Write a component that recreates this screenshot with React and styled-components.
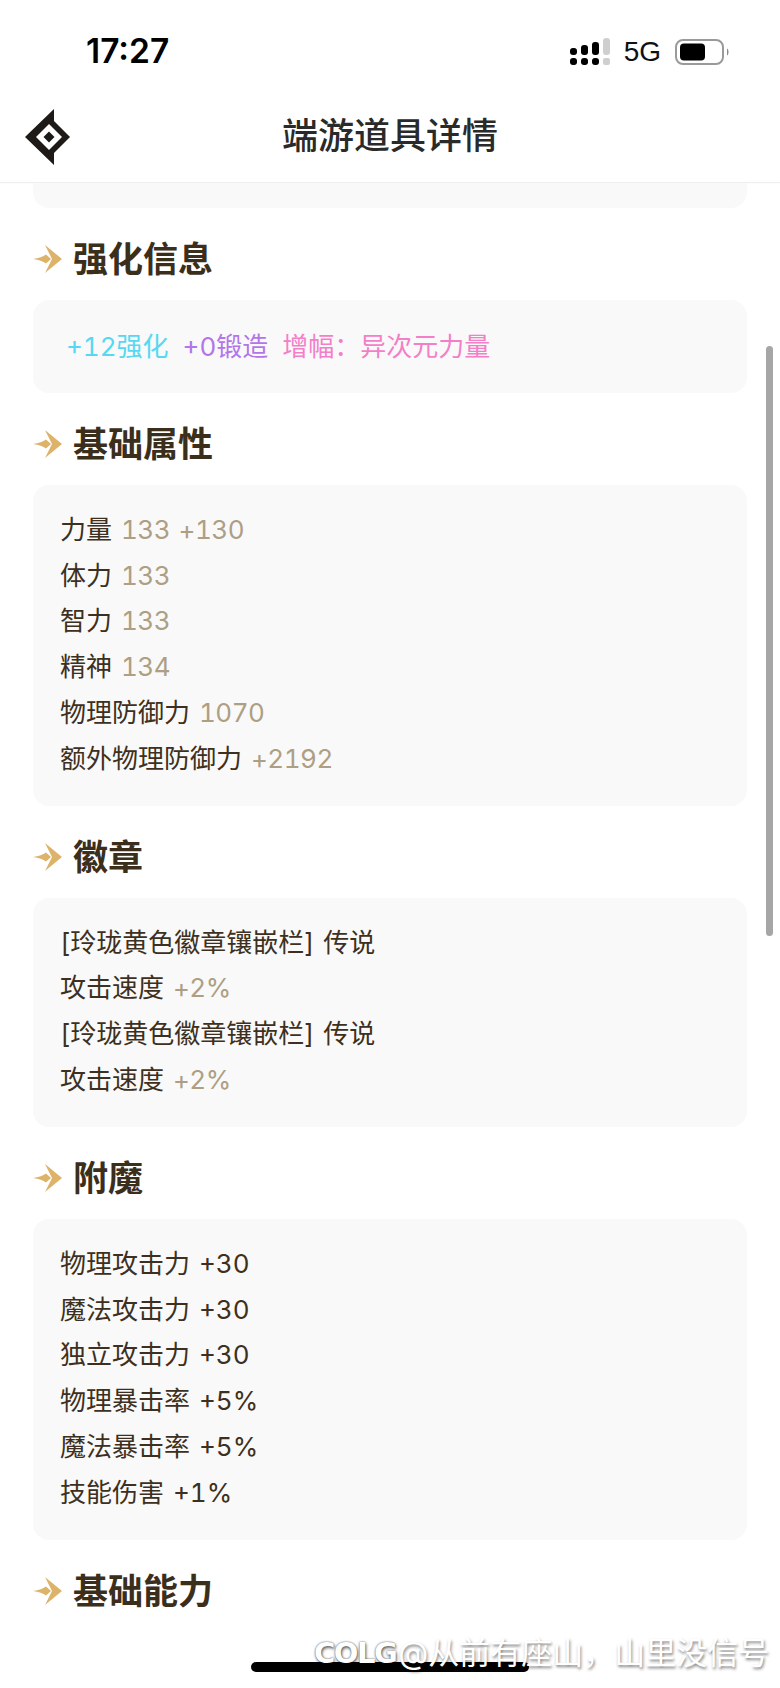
import styled, { createGlobalStyle } from "styled-components";

const GlobalStyle = createGlobalStyle`
  html, body {
    margin: 0;
    padding: 0;
    background: #fff;
  }
  * {
    box-sizing: border-box;
  }
`;

const Page = styled.div`
  position: relative;
  width: 780px;
  height: 1688px;
  overflow: hidden;
  background: #fff;
  font-family: "Inter", "Noto Sans CJK SC", sans-serif;
  color: #3d3020;
`;

const StatusBar = styled.div`
  height: 104px;
  padding: 0 50px 0 86px;
  display: flex;
  align-items: center;
  justify-content: space-between;
`;

const Time = styled.span`
  font-size: 33.5px;
  font-weight: 600;
  color: #000;
  line-height: 1;
`;

const StatusIcons = styled.div`
  display: flex;
  align-items: center;
  gap: 14px;
`;

const NetworkLabel = styled.span`
  font-family: "Liberation Sans", sans-serif;
  font-size: 28px;
  color: #111;
  line-height: 1;
`;

const NavBar = styled.header`
  height: 79px;
  display: grid;
  grid-template-columns: 90px 1fr 90px;
  align-items: center;
  border-bottom: 1px solid #f0efee;
  box-shadow: 0 1px 2px rgba(0, 0, 0, 0.02);
  padding-bottom: 13px;
`;

const LogoSlot = styled.div`
  padding-left: 25px;
  display: flex;
`;

const NavTitle = styled.h1`
  margin: 0;
  text-align: center;
  font-size: 36px;
  font-weight: 500;
  color: #2a2a2a;
  line-height: 1.2;
`;

const Content = styled.main`
  padding: 0 33px;
`;

const CutCard = styled.div`
  height: 25px;
  background: #f9f9f9;
  border-radius: 0 0 16px 16px;
`;

const SectionHead = styled.div`
  height: 40px;
  margin: 31px 0 21px;
  display: flex;
  align-items: center;
  gap: 10px;
`;

const SectionTitle = styled.h2`
  margin: 0;
  font-size: 35px;
  font-weight: 700;
  color: #3b2f1c;
  line-height: 40px;
`;

const Card = styled.section`
  background: #f9f9f9;
  border-radius: 16px;
  padding: 22px 27px 24.5px;
`;

const GradeCard = styled(Card)`
  height: 93px;
  padding: 0 33px;
  display: flex;
  align-items: center;
  gap: 14px;
`;

const Grade = styled.span`
  font-size: 26px;
  line-height: 1;
  font-variant-numeric: tabular-nums;
  color: ${(p) => p.$color};
`;

const Row = styled.div`
  font-size: 26px;
  line-height: 45.7px;
  white-space: nowrap;
  word-spacing: 2px;
  font-variant-numeric: tabular-nums;
`;

const Value = styled.span`
  color: #ad9f84;
  letter-spacing: -0.5px;
`;

const ScrollThumb = styled.div`
  position: absolute;
  right: 7px;
  top: 346px;
  width: 7px;
  height: 590px;
  border-radius: 4px;
  background: #a6a6a6;
`;

const HomeBar = styled.div`
  position: absolute;
  left: 251px;
  top: 1662px;
  width: 278px;
  height: 10px;
  border-radius: 5px;
  background: #000;
`;

const Watermark = styled.div`
  position: absolute;
  left: 314px;
  top: 1633px;
  display: flex;
  align-items: center;
  gap: 2px;
  color: #fff;
  font-size: 31px;
  line-height: 40px;
  white-space: nowrap;
  text-shadow: 1px 2px 3px rgba(0, 0, 0, 0.5);
`;

const WatermarkBrand = styled.span`
  font-family: "DejaVu Sans", sans-serif;
  font-size: 29px;
  font-weight: 700;
  letter-spacing: -1.5px;
  text-shadow: 0 0 2px rgba(0, 0, 0, 0.7), 1px 2px 3px rgba(0, 0, 0, 0.5);
`;

function SignalIcon() {
  const dark = [
    { x: 0, top: 10 },
    { x: 11, top: 7 },
    { x: 22, top: 4 },
  ];
  return (
    <svg width="40" height="28" viewBox="0 0 40 28">
      {dark.map((b) => (
        <g key={b.x} fill="#000">
          <rect x={b.x} y={b.top} width="7" height={17 - b.top} rx="3" />
          <rect x={b.x} y="20" width="7" height="7" rx="3" />
        </g>
      ))}
      <rect x="33" y="0" width="7" height="17" rx="3" fill="#cfcfcf" />
      <rect x="33" y="20" width="7" height="7" rx="2" fill="#cfcfcf" />
    </svg>
  );
}

function BatteryIcon() {
  return (
    <svg width="55" height="26" viewBox="0 0 55 26">
      <rect x="1" y="1" width="47" height="24" rx="7" fill="none" stroke="#9a9a9a" strokeWidth="2" />
      <rect x="5" y="4.5" width="25" height="17" rx="4" fill="#000" />
      <path d="M52 9.5c2 1 2 6 0 7z" fill="#8a8a8a" />
    </svg>
  );
}

function Logo() {
  return (
    <svg width="45" height="56" viewBox="0 0 45 56">
      <path d="M29 0V12L45 28L29 44V56L0 28Z" fill="#1d1a18" />
      <path d="M24 15L37 28L24 41L11 28Z" fill="#fff" />
      <path d="M24 22.5L29.5 28L24 33.5L18.5 28Z" fill="#1d1a18" />
    </svg>
  );
}

function HeadIcon() {
  return (
    <svg width="30" height="28" viewBox="0 0 30 28">
      <path d="M12 0L29 14L12 28L19 14Z" fill="#dcb368" />
      <path d="M0 14C6 13 10 12 13 9.5L18 14L13 18.5C10 16 6 15 0 14Z" fill="#dcb368" />
    </svg>
  );
}

function Section({ title, children }) {
  return (
    <>
      <SectionHead>
        <HeadIcon />
        <SectionTitle>{title}</SectionTitle>
      </SectionHead>
      {children}
    </>
  );
}

const stats = [
  ["力量", "133 +130"],
  ["体力", "133"],
  ["智力", "133"],
  ["精神", "134"],
  ["物理防御力", "1070"],
  ["额外物理防御力", "+2192"],
];

const badges = [
  ["[玲珑黄色徽章镶嵌栏] 传说"],
  ["攻击速度", "+2%"],
  ["[玲珑黄色徽章镶嵌栏] 传说"],
  ["攻击速度", "+2%"],
];

const enchants = [
  "物理攻击力 +30",
  "魔法攻击力 +30",
  "独立攻击力 +30",
  "物理暴击率 +5%",
  "魔法暴击率 +5%",
  "技能伤害 +1%",
];

export default function App() {
  return (
    <Page>
      <GlobalStyle />
      <StatusBar>
        <Time>17:27</Time>
        <StatusIcons>
          <SignalIcon />
          <NetworkLabel>5G</NetworkLabel>
          <BatteryIcon />
        </StatusIcons>
      </StatusBar>
      <NavBar>
        <LogoSlot>
          <Logo />
        </LogoSlot>
        <NavTitle>端游道具详情</NavTitle>
      </NavBar>
      <Content>
        <CutCard />
        <Section title="强化信息">
          <GradeCard>
            <Grade $color="#56d8f2">+12强化</Grade>
            <Grade $color="#b276ea">+0锻造</Grade>
            <Grade $color="#f47fc9">{"增幅\uFF1A异次元力量"}</Grade>
          </GradeCard>
        </Section>
        <Section title="基础属性">
          <Card>
            {stats.map(([name, value]) => (
              <Row key={name}>
                {name} <Value>{value}</Value>
              </Row>
            ))}
          </Card>
        </Section>
        <Section title="徽章">
          <Card>
            {badges.map(([name, value], i) => (
              <Row key={i}>
                {name} {value && <Value>{value}</Value>}
              </Row>
            ))}
          </Card>
        </Section>
        <Section title="附魔">
          <Card>
            {enchants.map((line) => (
              <Row key={line}>{line}</Row>
            ))}
          </Card>
        </Section>
        <Section title="基础能力" />
      </Content>
      <ScrollThumb />
      <HomeBar />
      <Watermark>
        <WatermarkBrand>COLG</WatermarkBrand>
        <span>{"@从前有座山\uFF0C山里没信号"}</span>
      </Watermark>
    </Page>
  );
}
